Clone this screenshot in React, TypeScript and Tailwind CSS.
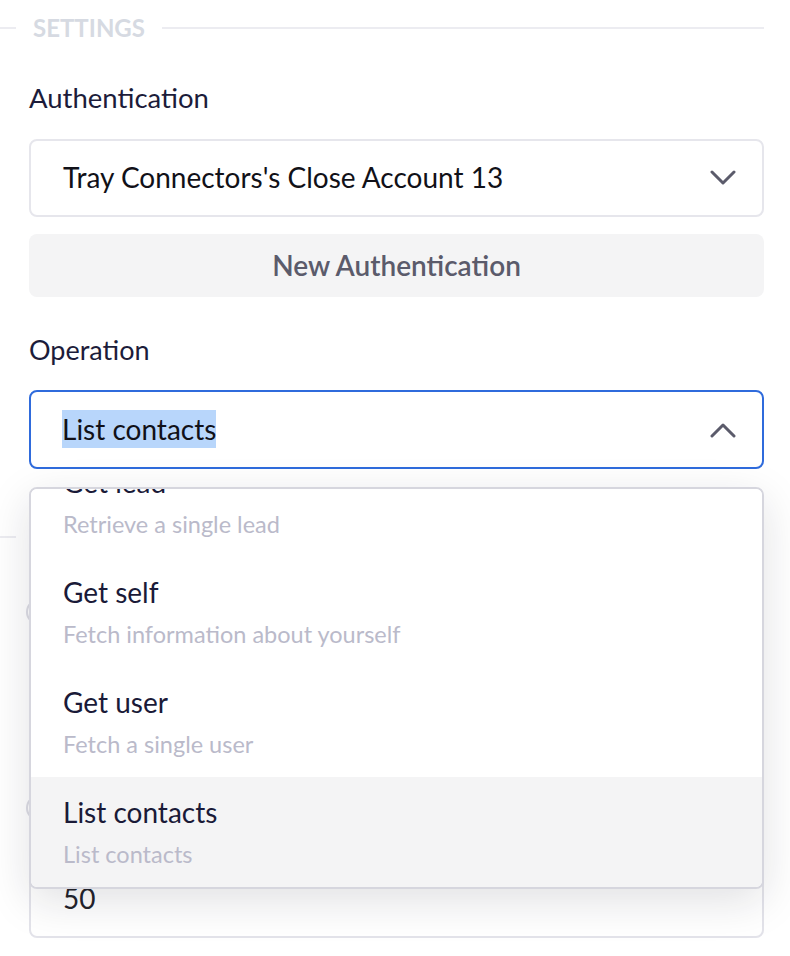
import React from 'react'

const font = { fontFamily: 'Lato, "Noto Sans", sans-serif' }

type Op = { title: string; desc: string; active?: boolean }

const operations: Op[] = [
  { title: 'Get lead', desc: 'Retrieve a single lead' },
  { title: 'Get self', desc: 'Fetch information about yourself' },
  { title: 'Get user', desc: 'Fetch a single user' },
  { title: 'List contacts', desc: 'List contacts', active: true },
]

function Chevron({ up = false }: { up?: boolean }) {
  return (
    <svg width="26" height="16" viewBox="0 0 26 16" fill="none" className="shrink-0">
      <path
        d={up ? 'M2 14 L13 3 L24 14' : 'M2 2 L13 13 L24 2'}
        stroke="#5b5b6b"
        strokeWidth="3"
        strokeLinecap="round"
        strokeLinejoin="round"
      />
    </svg>
  )
}

function SectionHeader({ label }: { label?: string }) {
  return (
    <div className="-ml-[29px] flex h-[28px] items-center">
      <div className="h-[2px] w-[16px] bg-[#ececf1]" />
      {label ? (
        <span className="mx-[17px] text-[24px] font-bold leading-[28px] text-[#d6dae2]">{label}</span>
      ) : (
        <span className="mx-[17px] w-[120px]" />
      )}
      <div className="h-[2px] flex-1 bg-[#ececf1]" />
    </div>
  )
}

export default function App() {
  return (
    <div className="min-h-[956px] w-full overflow-hidden bg-white pl-[29px] pr-[26px]" style={font}>
      <div className="pt-[14px]">
        <SectionHeader label="SETTINGS" />
      </div>

      <label className="mt-[40px] block text-[27.5px] leading-[32px] text-[#1c1c3a]">Authentication</label>

      <button className="mt-[25px] flex h-[78px] w-full items-center justify-between rounded-[8px] border-2 border-[#e6e6ec] bg-white pl-[32px] pr-[26px] text-left">
        <span className="-mt-[2px] text-[28px] leading-[32px] text-[#111118]">Tray Connectors's Close Account 13</span>
        <Chevron />
      </button>

      <button className="mt-[17px] flex h-[63px] w-full items-center justify-center rounded-[8px] bg-[#f4f4f5] text-[28px] font-semibold leading-[32px] text-[#5b5b6b]">
        <span className="-mt-[2px]">New Authentication</span>
      </button>

      <label className="mt-[37px] block text-[27px] leading-[32px] text-[#1c1c3a]">Operation</label>

      <div className="relative mt-[24px]">
        <button className="flex h-[79px] w-full items-center justify-between rounded-[8px] border-2 border-[#2f6bdc] bg-white pl-[31px] pr-[26px] text-left">
          <span className="-mt-[2px] bg-[#b8d6fb] text-[28px] leading-[38px] text-[#111118]">List contacts</span>
          <Chevron up />
        </button>

        {/* fields behind the open menu */}
        <div className="pt-[54px]">
          <SectionHeader />
          <div className="mt-[41px] flex h-[40px] items-center">
            <div className="-ml-[3px] h-[26px] w-[26px] rounded-full border-2 border-[#dcdce4]" />
          </div>
          <div className="mt-[156px] flex h-[40px] items-center">
            <div className="-ml-[3px] h-[26px] w-[26px] rounded-full border-2 border-[#dcdce4]" />
          </div>
          <div className="mt-[32px] flex h-[78px] w-full items-center rounded-[8px] border-2 border-[#e3e3ea] pl-[32px] text-[28px] text-[#22222a]">
            <span className="-mt-[2px]">50</span>
          </div>
        </div>

        <div className="absolute left-0 right-0 top-[97px] h-[402px] overflow-hidden rounded-[8px] border-2 border-[#d6d6de] bg-white shadow-[0_12px_44px_rgba(20,20,40,0.13)]">
          <ul className="-mt-[42px]">
            {operations.map((op) => (
              <li
                key={op.title}
                className={`h-[110px] px-[32px] pt-[19px] ${op.active ? 'bg-[#f4f4f5]' : 'bg-white'}`}
              >
                <div className="text-[28px] leading-[32px] text-[#1a1a38]">{op.title}</div>
                <div className="mt-[12px] text-[23.5px] leading-[28px] text-[#babaca]">{op.desc}</div>
              </li>
            ))}
          </ul>
        </div>
      </div>
    </div>
  )
}
